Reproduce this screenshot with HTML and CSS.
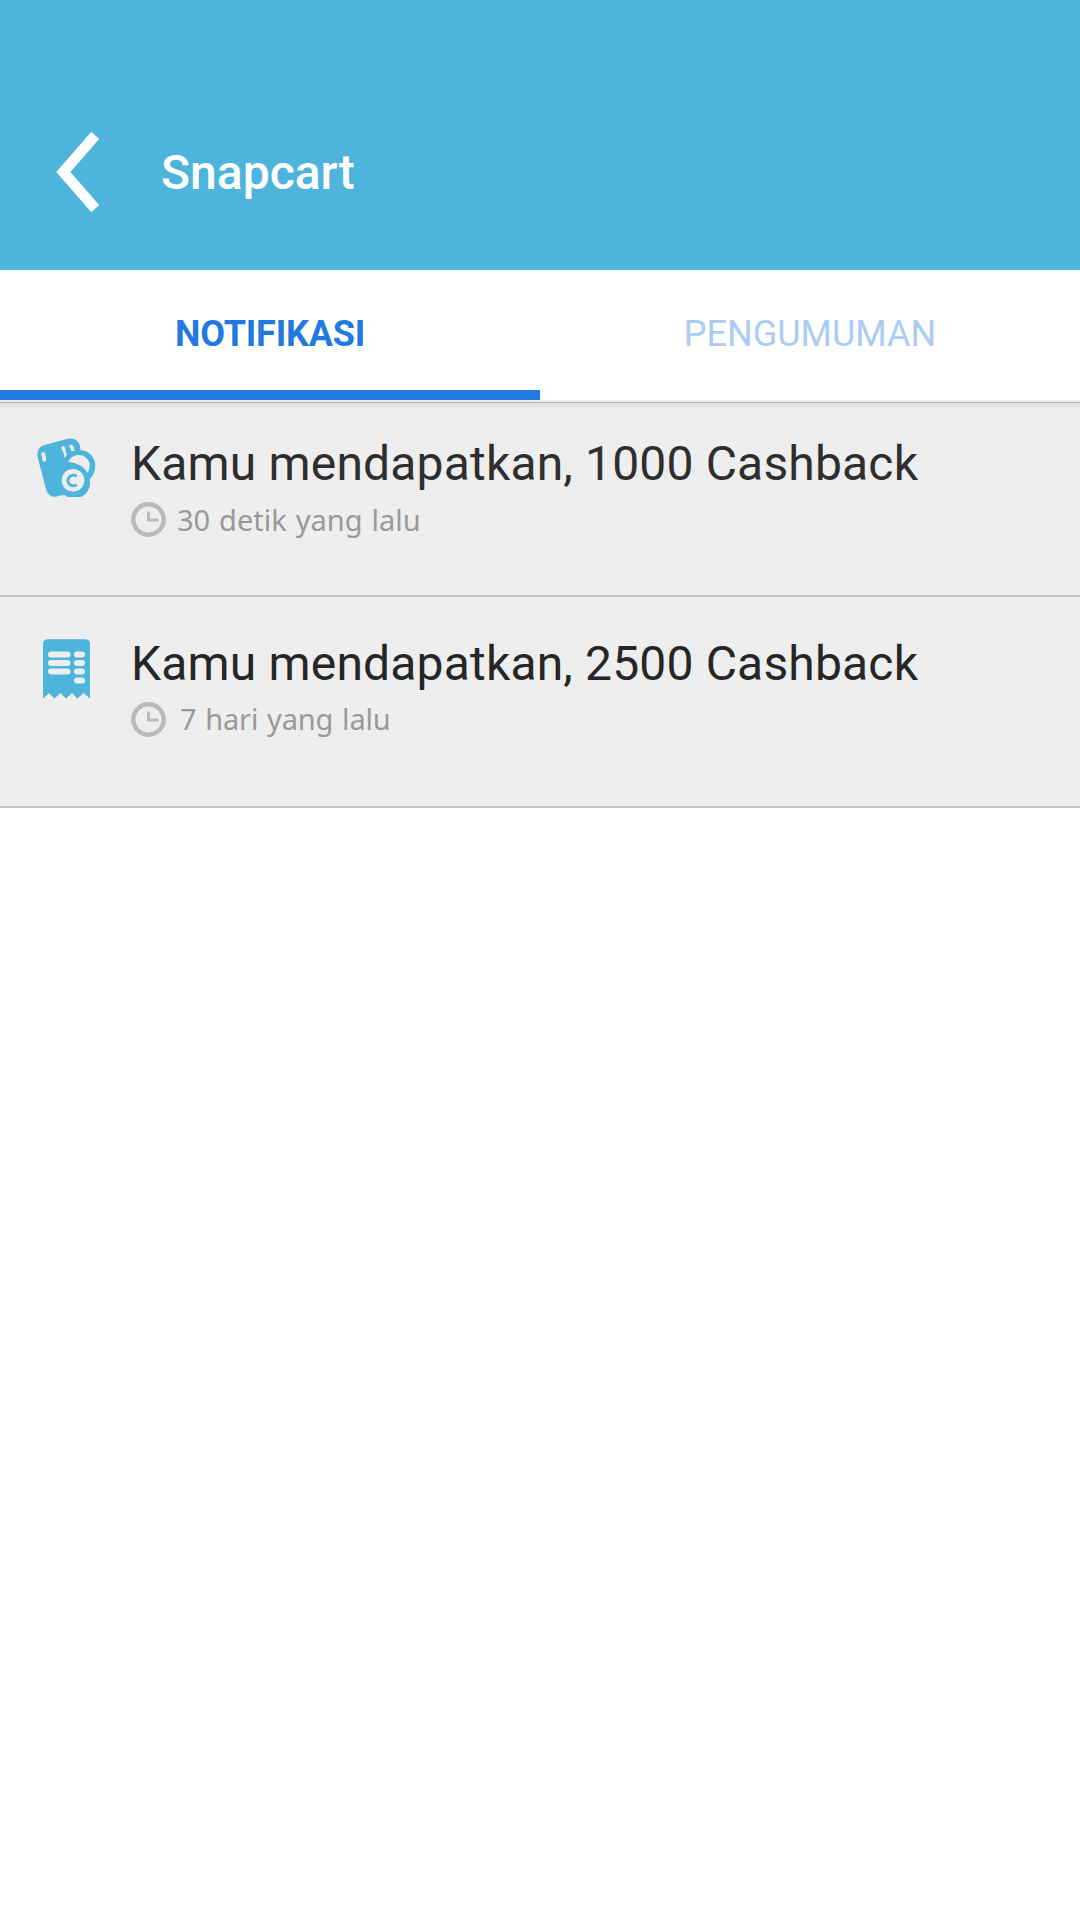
FILE: index.html
```html
<!DOCTYPE html>
<html lang="id">
  <head>
    <meta charset="UTF-8" />
    <meta name="viewport" content="width=device-width, initial-scale=1.0" />
    <title>Snapcart</title>
    <link rel="stylesheet" href="styles.css">
  </head>

  <body>
    <header class="header">
      <a class="back" href="#" aria-label="Kembali">
        <svg width="44" height="80" viewBox="0 0 44 80">
          <path d="M39.2 3.4 7.3 40 39.2 76.6" fill="none" stroke="#fff" stroke-width="10.6" />
        </svg>
      </a>
      <h1 class="title">Snapcart</h1>
    </header>
    <nav class="tabs">
      <a class="tab active" href="#">NOTIFIKASI</a>
      <a class="tab" href="#">PENGUMUMAN</a>
    </nav>
    <main class="list">
      <article class="item">
        <svg class="icon icon-coins" width="59" height="59" viewBox="50 38 177 177">
          <path fill="#4db4dc" d="M70 60 142 40Q172 35 179 62L180 74Q217 78 225 116Q225 147 208 162A47 47 0 0 1 134 210Q123 208 114 213Q86 220 78 194L52 96Q47 69 70 60Z" />
          <g fill="#eee">
            <path d="M144 109C157 82 198 82 208 114Q210 129 202 143Q188 115 144 109Z" />
            <circle cx="158" cy="165" r="34" />
            <path d="M122 66Q132 58 134 67L139 88 133 99Q132 85 122 66ZM146 61Q155 54 159 63L163 76 153 77Z" />
          </g>
          <path d="M69 86 72 103" fill="none" stroke="#eee" stroke-width="12" stroke-linecap="round" />
          <path d="M169 153A16 16 0 1 0 169 178" fill="none" stroke="#4db4dc" stroke-width="9" />
        </svg>
        <div class="content">
          <h2 class="message">Kamu mendapatkan, 1000 Cashback</h2>
          <div class="time">
            <svg class="clock" width="35" height="35" viewBox="0 0 35 35">
              <circle cx="17.5" cy="17.5" r="15.2" />
              <path d="M17.5 9.5V18H27.5" />
            </svg>
            <span>30 detik yang lalu</span>
          </div>
        </div>
      </article>
      <article class="item dark">
        <svg class="icon icon-receipt" width="47" height="60" viewBox="0 0 47 60">
          <path fill="#4db4dc" d="M0 5.3Q0 .3 5 .3H42Q47 .3 47 5.3V59.5L40.5 54 34.5 59.5 29 54 23 59.5 17.5 54 11.5 59.5 6 54 0 59.5Z" />
          <path d="M8 15.5H24.5M8 24H24.5M8 32.5H24.5M34 15.5H39M34 24H39M34 32.5H39M34 41.5H39" fill="none" stroke="#eee" stroke-width="6" stroke-linecap="round" />
        </svg>
        <div class="content">
          <h2 class="message">Kamu mendapatkan, 2500 Cashback</h2>
          <div class="time">
            <svg class="clock" width="35" height="35" viewBox="0 0 35 35">
              <circle cx="17.5" cy="17.5" r="15.2" />
              <path d="M17.5 9.5V18H27.5" />
            </svg>
            <span>7 hari yang lalu</span>
          </div>
        </div>
      </article>
    </main>
  </body>
</html>
```
FILE: styles.css
```css
* {
  margin: 0;
  padding: 0;
  box-sizing: border-box;
}
body {
  background-color: #fff;
  font-family: Roboto, sans-serif;
}
a {
  text-decoration: none;
}
svg {
  display: block;
  flex-shrink: 0;
}
.header {
  display: flex;
  align-items: center;
  height: 270px;
  padding: 74px 56px 0;
  background-color: #4db4dc;
}
.title {
  margin: 2px 0 0 61px;
  color: #fff;
  font-size: 48px;
  font-weight: 500;
  line-height: 56px;
}
.tabs {
  display: flex;
  height: 130px;
}
.tab {
  flex: 1;
  padding-top: 43px;
  text-align: center;
  font-size: 36px;
  line-height: 42px;
  color: #abcdf4;
}
.tab.active {
  color: #227ae0;
  font-weight: 700;
  letter-spacing: -0.2px;
  border-bottom: 10px solid #227ae0;
}
.list {
  padding-top: 3px;
  background: linear-gradient(#e8e8e8 2px, #b5b5b5 2px, #b5b5b5 3px, #dadada 3px, #eee 9px);
}
.item {
  display: flex;
  height: 194px;
  padding: 33px 37px 0;
  border-bottom: 2px solid #c3c3c3;
  color: #2e2e2e;
}
.item.dark {
  height: 211px;
  padding: 39px 43px 0;
  color: #262626;
}
.icon-coins {
  margin: 2px 35px 0 0;
}
.icon-receipt {
  margin: 3px 41px 0 0;
}
.message {
  font-size: 48px;
  font-weight: 400;
  line-height: 56px;
  letter-spacing: 0.17px;
  white-space: nowrap;
}
.time {
  display: flex;
  align-items: center;
  height: 35px;
  margin-top: 10px;
  font-family: "Noto Sans", sans-serif;
  font-size: 29px;
  word-spacing: 1.4px;
  color: #999;
}
.time span {
  margin-left: 11px;
}
.dark .time span {
  margin: 0 0 3px 14px;
}
.dark .time {
  letter-spacing: -0.15px;
}
.clock {
  fill: none;
  stroke: #bababa;
  stroke-width: 4.4;
}
.clock path {
  stroke-width: 3;
}
```
